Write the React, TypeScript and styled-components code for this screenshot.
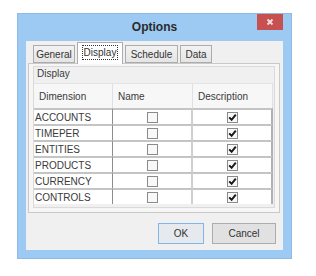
import React from "react";
import styled, { createGlobalStyle } from "styled-components";

const GlobalStyle = createGlobalStyle`
  body {
    margin: 0;
    background: #ffffff;
    font-family: "Liberation Sans", Arial, sans-serif;
  }
`;

const dimensions = [
  { id: "ACCOUNTS", name: false, description: true },
  { id: "TIMEPER", name: false, description: true },
  { id: "ENTITIES", name: false, description: true },
  { id: "PRODUCTS", name: false, description: true },
  { id: "CURRENCY", name: false, description: true },
  { id: "CONTROLS", name: false, description: true },
];

const tabs = [
  { label: "General", width: 42 },
  { label: "Display", width: 46 },
  { label: "Schedule", width: 53 },
  { label: "Data", width: 32 },
];

const CheckBox = ({ checked }: { checked: boolean }) => (
  <Box>
    {checked ? (
      <svg width="9" height="9" viewBox="0 0 9 9">
        <path d="M1.2 4.4 L3.6 6.8 L7.8 1.6" fill="none" stroke="#1a1a1a" strokeWidth="2" />
      </svg>
    ) : null}
  </Box>
);

const App = () => {
  return (
    <>
      <GlobalStyle />
      <Window>
        <TitleBar>
          <span />
          <Title>Options</Title>
          <CloseButton>
            <svg width="8" height="8" viewBox="0 0 8 8">
              <path d="M1.5 1.5 L6.5 6.5 M6.5 1.5 L1.5 6.5" stroke="#f4dede" strokeWidth="1.8" />
            </svg>
          </CloseButton>
        </TitleBar>
        <Client>
          <TabStrip>
            {tabs.map((t) => (
              <Tab key={t.label} $active={t.label === "Display"} $w={t.width}>
                {t.label === "Display" ? <Focus>{t.label}</Focus> : t.label}
              </Tab>
            ))}
          </TabStrip>
          <TabPanel>
            <Group>
              <Caption>Display</Caption>
              <Grid>
                <HeadCell>Dimension</HeadCell>
                <HeadCell>Name</HeadCell>
                <HeadCell>Description</HeadCell>
                {dimensions.map((d) => (
                  <React.Fragment key={d.id}>
                    <DimCell>{d.id}</DimCell>
                    <CheckCell $edge="#cfcfcf">
                      <CheckBox checked={d.name} />
                    </CheckCell>
                    <CheckCell $edge="#b0b0b0">
                      <CheckBox checked={d.description} />
                    </CheckCell>
                  </React.Fragment>
                ))}
              </Grid>
            </Group>
          </TabPanel>
          <ButtonRow>
            <Button $default $w={46}>OK</Button>
            <Button $w={64}>Cancel</Button>
          </ButtonRow>
        </Client>
      </Window>
    </>
  );
};

export default App;

const Window = styled.div`
  margin: 13px 0 0 17px;
  width: 275px;
  box-sizing: border-box;
  background: #9ccaf3;
  border: 1px solid #8dbbe6;
  padding: 0 8px 8px 8px;
`;

const TitleBar = styled.div`
  height: 27px;
  display: grid;
  grid-template-columns: 26px 1fr 26px;
  align-items: start;
`;

const Title = styled.div`
  text-align: center;
  font-weight: bold;
  font-size: 12px;
  color: #2b2b2b;
  line-height: 27px;
`;

const CloseButton = styled.div`
  width: 26px;
  height: 16px;
  background: #c75050;
  display: flex;
  align-items: center;
  justify-content: center;
`;

const Client = styled.div`
  background: #f0f0f0;
  height: 209px;
  box-sizing: border-box;
  padding: 1px 3px 6px 2px;
  display: flex;
  flex-direction: column;
`;

const TabStrip = styled.div`
  display: flex;
  align-items: flex-end;
  gap: 2px;
  height: 21px;
  padding-left: 5px;
`;

const Tab = styled.div<{ $active?: boolean; $w: number }>`
  position: relative;
  z-index: ${(p) => (p.$active ? 1 : 0)};
  width: ${(p) => p.$w}px;
  box-sizing: border-box;
  height: ${(p) => (p.$active ? 22 : 18)}px;
  margin-bottom: ${(p) => (p.$active ? -1 : 0)}px;
  border: 1px solid #acacac;
  border-bottom: ${(p) => (p.$active ? "none" : "1px solid #acacac")};
  background: ${(p) =>
    p.$active ? "#ffffff" : "linear-gradient(#f2f2f2, #e5e5e5)"};
  font-size: 10px;
  color: #333;
  display: flex;
  align-items: ${(p) => (p.$active ? "flex-start" : "center")};
  padding-top: ${(p) => (p.$active ? 2 : 0)}px;
  justify-content: center;
`;

const Focus = styled.span`
  border: 1px dotted #333;
  padding: 1px 1px;
  line-height: 11px;
`;

const TabPanel = styled.div`
  width: 252px;
  box-sizing: border-box;
  height: 150px;
  border: 1px solid #c9c9c9;
  background: #f6f6f6;
  padding: 2px 4px 4px 4px;
`;

const Group = styled.div`
  border: 1px solid #dadada;
  background: #f0f0f0;
  height: 100%;
  box-sizing: border-box;
`;

const Caption = styled.div`
  height: 16px;
  line-height: 14px;
  font-size: 10px;
  color: #3a3a3a;
  padding-left: 3px;
`;

const Grid = styled.div`
  display: grid;
  grid-template-columns: 79px 80px 80px;
  grid-auto-rows: 16px;
  grid-template-rows: 25px;
`;

const HeadCell = styled.div`
  background: #f7f7f7;
  border-top: 1px solid #e4e4e4;
  border-right: 1px solid #e0e0e0;
  font-size: 10px;
  color: #3a3a3a;
  display: flex;
  align-items: center;
  padding-left: 5px;
`;

const DimCell = styled.div`
  background: #ffffff;
  border-top: 2px solid #c4c4c4;
  border-right: 1px solid #8c8c8c;
  font-size: 10px;
  color: #3a3a3a;
  display: flex;
  align-items: center;
  padding-left: 1px;
`;

const CheckCell = styled.div<{ $edge: string }>`
  background: #ffffff;
  border-top: 2px solid #c4c4c4;
  border-right: 2px solid ${(p) => p.$edge};
  display: flex;
  align-items: center;
  justify-content: center;
`;

const Box = styled.div`
  width: 11px;
  height: 11px;
  box-sizing: border-box;
  border: 1px solid #8a8a8a;
  background: #f8f8f8;
  display: flex;
  align-items: center;
  justify-content: center;
`;

const ButtonRow = styled.div`
  display: flex;
  justify-content: flex-end;
  gap: 8px;
  margin-top: auto;
  padding-right: 4px;
`;

const Button = styled.div<{ $default?: boolean; $w: number }>`
  width: ${(p) => p.$w}px;
  height: 21px;
  box-sizing: border-box;
  border: 1px solid ${(p) => (p.$default ? "#80b6ea" : "#adadad")};
  background: ${(p) => (p.$default ? "#e6e9ed" : "#e1e1e1")};
  font-size: 10px;
  color: #333;
  display: flex;
  align-items: center;
  justify-content: center;
`;
